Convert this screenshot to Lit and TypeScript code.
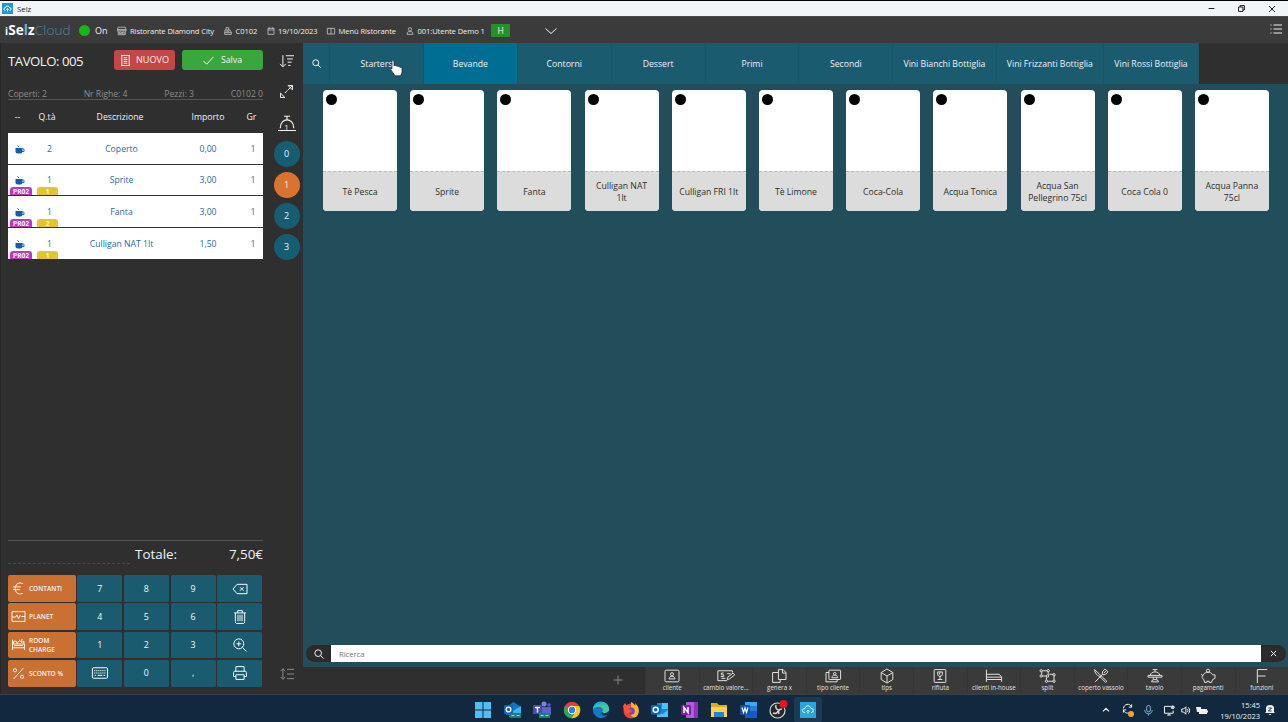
import { LitElement, html, css, svg, nothing } from "lit";
import { customElement, property } from "lit/decorators.js";
import { classMap } from "lit/directives/class-map.js";

// Line icons, drawn on a 24 unit grid.
const ICONS: Record<string, any> = {
  store: svg`<path d="M3 3h18l2 6H1zM1 9v3h22V9M3 12v10h18V12M14 22v-7h4v7M6 15h5v4H6z"/>`,
  register: svg`<path d="M6 9V2h8v7M3 9h15l4 8v5H2v-5zM2 17h20M7 13h9"/>`,
  calendar: svg`<path d="M3 4h18v18H3zM3 9h18M7 1v5M17 1v5"/>`,
  book: svg`<path d="M12 4H1v17h22V4H12v18"/>`,
  user: svg`<circle cx="12" cy="7" r="5"/><path d="M3 22c0-6 3-8 6-8h6c3 0 6 2 6 8z"/>`,
  receipt: svg`<path d="M2 1h20M2 23h20M4 1v22M20 1v22M8 6h8M8 10h8M8 14h8M8 18h8"/>`,
  check: svg`<path d="M1 13l7 7L23 4"/>`,
  search: svg`<circle cx="10" cy="10" r="8"/><path d="M16 16l7 7"/>`,
  sort: svg`<path d="M5 2v20M0 17l5 5 5-5M10 3h14M12 8.500h10M13 14h7M14 19.500h4"/>`,
  expand: svg`<path d="M9 15l5-5M15 9l8-8M15 1h8v8zM1 15v8h8z"/>`,
  bell: svg`<path d="M0 22h24M3 19C3 4 21 4 21 19M12 7V3M8 3h8"/>`,
  lines: svg`<path d="M5 3v18M1 7l4-4 4 4M1 17l4 4 4-4M12 4h12M12 12h12M12 20h12"/>`,
  list: svg`<path d="M7 4h17M7 12h17M7 20h17M1 4h2M1 12h2M1 20h2"/>`,
  chev: svg`<path d="M1 7l11 10L23 7"/>`,
  up: svg`<path d="M3 16l9-9 9 9"/>`,
  plus: svg`<path d="M12 1v22M1 12h22"/>`,
  close: svg`<path d="M3 3l18 18M21 3L3 21"/>`,
  min: svg`<path d="M2 12h20"/>`,
  restore: svg`<path d="M2 7h15v15H2zM7 7V2h15v15h-5"/>`,
  euro: svg`<path d="M20 3C10-1 6 6 6 12s4 13 14 9M2 9h14M2 14h13"/>`,
  pulse: svg`<path d="M0 3h24v18H0zM0 13h7l2-4 3 7 3-6 2 2h7"/>`,
  bed: svg`<path d="M1 3v19M1 18h22M23 22V11H1M3 11V6h5l2 5M10 8l5-3 2 3 5-2v5M4 14h16M13 3l2 2M19 2l-2 5"/>`,
  percent: svg`<path d="M21 2L3 22"/><circle cx="5.500" cy="6" r="3"/><circle cx="18.500" cy="18" r="3"/>`,
  back: svg`<path d="M7 4h17v16H7l-7-8zM12 9l6 6M18 9l-6 6"/>`,
  trash: svg`<path d="M2 5h20M8 5V1h8v4M4 5v15q0 3 2 3h12q2 0 2-3V5M8.500 8v11M12 8v11M15.500 8v11"/>`,
  zoomin: svg`<circle cx="10" cy="10" r="8.500"/><path d="M16 16l7 7M10 6v8M6 10h8"/>`,
  keyboard: svg`<rect x="-1" y="3" width="26" height="18" rx="2"/><path d="M2 8h20M2 12h20" stroke-dasharray="2 1.500"/><path d="M3 16h2M8 16h8M18 16h3"/>`,
  printer: svg`<path d="M5 9V1h14v8M5 18H1v-7q0-2 2-2h18q2 0 2 2v7h-4M5 15h14v8H5z"/>`,
  card: svg`<rect x="0" y="2" width="24" height="20" rx="2"/><circle cx="12" cy="9" r="2.700"/><path d="M7 17c0-6 10-6 10 0z"/>`,
  cheque: svg`<path d="M23 6V3H-2v17h16M14 8h6M4 16h7M8 7H4v3h4v3H3M14 18l1-4 9-7 3 3-9 7z"/>`,
  copies: svg`<path d="M11 1h8l5 5v12H11zM18 1v6h6M11 6H1v17h13v-5"/>`,
  cards: svg`<rect x="5" y="2" width="20" height="16" rx="1"/><path d="M5 6H0v16h19v-4M10 15c0-6 10-6 10 0z"/><circle cx="15" cy="8" r="2.200"/>`,
  cube: svg`<path d="M12 0l10 6v12l-10 6-10-6V6zM2 6l10 6 10-6M12 12v12"/>`,
  reject: svg`<rect x="2" y="1" width="20" height="22" rx="1"/><path d="M8 5h8v4c0 5-8 5-8 0zM12 13v5M8 18h8M12 5l-1 4 2 2"/>`,
  bunk: svg`<path d="M-1 1v21M-1 18h26M25 22v-8l-4-5H-1M-1 14h26"/>`,
  split: svg`<path d="M3 3h11v9H3zM16 9h8v12H11v-7"/><g fill="#3a3a3a"><circle cx="2" cy="3" r="2"/><circle cx="14" cy="3" r="2"/><circle cx="2" cy="12" r="2"/><circle cx="13" cy="12" r="2"/><circle cx="24" cy="10" r="2"/><circle cx="11" cy="21" r="2"/><circle cx="24" cy="21" r="2"/></g>`,
  cutlery: svg`<path d="M1 1c0 6 4 10 9 12l10 10 2-2zM2 22L15 9"/><path d="M14 9l1-5 4-4 5 5-4 4-5 1zM17 7l4-4"/>`,
  table: svg`<path d="M0 11h24v3H0zM4 11C4 3 20 3 20 11M12 5V1M8 1h8M9 14v4M15 14v4M6 22q0-4 6-4t6 4z"/>`,
  pig: svg`<path d="M4 10c3-6 13-6 16 0h4v6l-4 2-2 5h-4v-2h-4v2H6l-1-5c-4-2-4-5-1-8zM0 9l4 3"/><circle cx="12" cy="3" r="2.800"/>`,
  f: svg`<path d="M4 24V1h17M4 12h14"/>`,
  cloud: svg`<path d="M6 17c-5 0-5-7 0-7 1-6 10-6 12 0 5 0 5 7 0 7M9 15l3-3 3 3M12 12v8"/>`,
  sync: svg`<path d="M21 9C17-1 4 2 3 12M21 3v6h-6M3 15c2 8 12 9 15 4M3 21v-6h6"/>`,
  mic: svg`<rect x="8" y="1" width="8" height="14" rx="4"/><path d="M4 11c0 11 16 11 16 0M12 19v4"/>`,
  screen: svg`<path d="M15 3H1v15h19v-6M7 22h8M11 18v4M19 1v7M16 3h6v4h-6z"/>`,
  speaker: svg`<path d="M2 8h5l6-6v20l-6-6H2zM17 8c2 3 2 5 0 8M20 4c4 5 4 11 0 16"/>`,
};

@customElement("ui-icon")
export class UiIcon extends LitElement {
  @property() name = "";
  @property({ type: Number }) size = 14;
  @property({ type: Number }) weight = 1;
  static styles = css`
    :host { display: inline-flex; flex: none; }
    svg { display: block; overflow: visible; fill: none; stroke: currentColor; stroke-linejoin: round; }
  `;
  render() {
    return html`<svg width=${this.size} height=${this.size} viewBox="0 0 24 24"
      stroke-width=${(this.weight * 24) / this.size}>${ICONS[this.name]}</svg>`;
  }
}

// Full-colour pictures of the taskbar applications, on a 20 unit grid.
const APPS: any[] = [
  svg`<path fill="#50bdf5" d="M2 2h7.500v7.500H2zM10.500 2H18v7.500h-7.500zM2 10.500h7.500V18H2zM10.500 10.500H18V18h-7.500z"/>`,
  svg`<path fill="#1475c4" d="M3 7l7.500-5L18 7v8H3z"/><path fill="#3bb5ee" d="M8 12l10-6v11H6z"/><rect x="1" y="5" width="9" height="9" rx="1" fill="#1262b8"/><circle cx="5.500" cy="9.500" r="2.400" fill="none" stroke="#fff" stroke-width="1.300"/><path fill="#1e7d78" d="M7 13h11v5H7z"/><path stroke="#8ce1d2" d="M8.500 15.500h3M13.500 15.500h3"/>`,
  svg`<circle cx="12" cy="4" r="2.500" fill="#7b83eb"/><circle cx="17" cy="5" r="1.800" fill="#5059c9"/><path fill="#5a62c8" d="M8 7h11v8H8z"/><rect x="1" y="5" width="9" height="9" rx="1" fill="#444cb5"/><path stroke="#fff" stroke-width="1.400" d="M3 7.500h5M5.500 7.500v5"/><path fill="#1e7d78" d="M7 13h11v5H7z"/><path stroke="#8ce1d2" d="M8.500 15.500h3M13.500 15.500h3"/>`,
  svg`<circle cx="10" cy="10" r="8.200" fill="#e23e31"/><path fill="#30a552" d="M10 10L2.900 6A8.200 8.200 0 0 0 9.500 18.200l4-6.200z"/><path fill="#fbc71b" d="M10 10l3.500 2-4 6.200A8.200 8.200 0 0 0 17.200 6H10z"/><circle cx="10" cy="10" r="4.200" fill="#fff"/><circle cx="10" cy="10" r="3.200" fill="#347fe2"/>`,
  svg`<circle cx="10" cy="10" r="8.200" fill="#1479c4"/><path fill="#42c7a0" d="M2 9C3 0 17-1 18.200 9c0 4-5 5-7 3 2-3-1-6-5-5-2 0-3 1-4.200 2z"/><path fill="#23b0dd" d="M2 9C4-1 13 1 15 5 9 3 4 5 2 9z"/><path fill="#12283f" d="M11 12c2 2 5 1.500 7-1l-.6 3.500c-4 2-8 1-6.400-2.500z"/>`,
  svg`<circle cx="10" cy="11" r="7.500" fill="#f2462c"/><path fill="#fdb52a" d="M10 2c3 1 3 3 4 4 1-1 0-2 0-3 5 4 5 11 1 14-4 1-6-2-5-6z"/><circle cx="10" cy="11" r="3.800" fill="#7a42c8"/><path fill="#f9543b" d="M2 6l2-3 2 3h4L8 9l3 2-4 3-4-3z"/>`,
  svg`<path fill="#1686d8" d="M7 3h11v14H7z"/><path fill="#4fc3f5" d="M12 3h6v6h-6zM7 12l5.500 2L18 10v7H7z"/><rect x="1" y="5" width="9.500" height="9.500" rx="1" fill="#0a66b9"/><circle cx="5.700" cy="9.700" r="2.500" fill="none" stroke="#fff" stroke-width="1.400"/>`,
  svg`<rect x="6" y="2" width="12" height="16" rx="1" fill="#b35bd8"/><path fill="#8a32b8" d="M14 2h4v16h-4z"/><rect x="1" y="5" width="10" height="10" rx="1" fill="#7a21a6"/><path fill="none" stroke="#fff" stroke-width="1.500" d="M4 13V7.500l4 5V7"/>`,
  svg`<path fill="#e5a91d" d="M2 3h6l2 2h8v12H2z"/><path fill="#fcd354" d="M2 7h16v10H2z"/><path fill="#2a83c8" d="M5 12h10v5H5z"/>`,
  svg`<path fill="#2b7cd3" d="M6 2h12v16H6z"/><path fill="#41a5ee" d="M6 2h12v4H6z"/><path fill="#185abd" d="M6 11h12v7H6z"/><rect x="1" y="5" width="10" height="10" rx="1" fill="#174fa8"/><path fill="none" stroke="#fff" stroke-width="1.200" d="M3 7.500l1.500 5L6 8l1.500 4.500L9 7.500"/>`,
  svg`<circle cx="9.500" cy="10.500" r="7.500" fill="#25262b" stroke="#d6d6d6" stroke-width="1.200"/><path fill="none" stroke="#d6d6d6" stroke-width="1.500" d="M8 5c-1 3 1 5 3 5M14 9c-3 0-4 2-3 5M5 13c3 1 5 0 5-3"/><circle cx="15.500" cy="4" r="4" fill="#e8151c"/>`,
  svg`<path fill="#2ba5dc" d="M2 2h16v16H2z"/><path fill="none" stroke="#fff" stroke-width=".9" d="M7 12.500c-3.500 0-3.500-4 0-4 .8-3.500 5-3.500 6 0 3 0 3 4 0 4M8.500 11.500l1.500-1.500 1.500 1.500M10 10v3.500"/>`,
];

@customElement("app-root")
export class AppRoot extends LitElement {
  private info = [
    ["store", "Ristorante Diamond City", 107],
    ["register", "C0102", 42.5],
    ["calendar", "19/10/2023", 60.5],
    ["book", "Menù Ristorante", 79],
    ["user", "001:Utente Demo 1", 85],
  ] as const;
  private rows = [
    ["2", "Coperto", "0,00", ""],
    ["1", "Sprite", "3,00", "1"],
    ["1", "Fanta", "3,00", "2"],
    ["1", "Culligan NAT 1lt", "1,50", "1"],
  ];
  private tabs = ["Starters", "Bevande", "Contorni", "Dessert", "Primi", "Secondi",
    "Vini Bianchi Bottiglia", "Vini Frizzanti Bottiglia", "Vini Rossi Bottiglia"];
  private products = ["Tè Pesca", "Sprite", "Fanta", "Culligan NAT\n1lt", "Culligan FRI 1lt", "Tè Limone",
    "Coca-Cola", "Acqua Tonica", "Acqua San\nPellegrino 75cl", "Coca Cola 0", "Acqua Panna\n75cl"];
  private pay = [["euro", "CONTANTI"], ["pulse", "PLANET"], ["bed", "ROOM CHARGE"], ["percent", "SCONTO %"]];
  private keys = [["7", "8", "9", "@back"], ["4", "5", "6", "@trash"], ["1", "2", "3", "@zoomin"], ["@keyboard", "0", ",", "@printer"]];
  private tools = [["card", "cliente"], ["cheque", "cambio valore..."], ["copies", "genera x"], ["cards", "tipo cliente"],
    ["cube", "tips"], ["reject", "rifiuta"], ["bunk", "clienti in-house"], ["split", "split"], ["cutlery", "coperto vassoio"],
    ["table", "tavolo"], ["pig", "pagamenti"], ["f", "funzioni"]];

  static styles = css`
    :host { display: flex; flex-direction: column; width: 1288px; height: 722px; overflow: hidden; background: #2f2f2f;
      color: #f2f2f2; font-family: "Open Sans", sans-serif; font-size: 8.67px; line-height: 12px; white-space: nowrap; }
    * { box-sizing: border-box; }
    .title { height: 16px; flex: none; border-top: 1px solid #000; background: #f1f5f9; color: #222; display: flex; align-items: center; padding-left: 2px; font-size: 7.800px; }
    .title .app { width: 11px; height: 11px; background: #2497cf; color: #fff; display: grid; place-items: center; margin-right: 4px; }
    .title .win { margin-left: auto; display: flex; gap: 23px; padding-right: 12px; color: #222; }
    .head { height: 27px; flex: none; background: #3b3b3b; display: flex; align-items: center; padding: 1px 6px 0 5px; font-size: 7.600px; letter-spacing: -.09px; border-top: 1px solid #4a4a4a; }
    .logo { width: 74px; font-size: 13.600px; line-height: 18px; letter-spacing: .08px; color: #fff; font-weight: 700; }
    .logo .cl { color: #3f8eb4; font-weight: 300; }
    .logo .sm { font-size: 10px; }
    .logo i { color: #6fb5d0; font-style: normal; }
    .led { width: 11px; height: 11px; border-radius: 50%; background: #1ab51a; margin-right: 5px; }
    .on { width: 22px; font-size: 9px; }
    .info { display: flex; align-items: center; gap: 3.500px; color: #f0f0f0; }
    .info ui-icon { color: #c8c8c8; }
    .h { width: 19px; height: 13px; background: #27902b; border-radius: 1px; text-align: center; line-height: 13px; font-size: 8.500px; margin-right: 35px; }
    .head .menu { margin-left: auto; }
    .main { height: 651px; flex: none; display: grid; grid-template-columns: 303px 985px; }
    .left { display: grid; grid-template-columns: 262px 40px; border-left: 1px solid #262626; }
    .order { display: flex; flex-direction: column; padding-left: 7px; }
    .top { display: flex; align-items: center; height: 34px; gap: 7px; }
    .top .name { font-size: 13.200px; letter-spacing: -.48px; width: 99px; padding-top: 1px; }
    .btn { height: 20px; border-radius: 3px; display: flex; align-items: center; justify-content: center; font-size: 9.100px; gap: 5px; background: #c64545; width: 61px; }
    .btn.save { background: #3aa63e; width: 81px; gap: 7px; font-size: 8.800px; }
    .stats { height: 14px; margin: 9px 0 11px; padding-top: 1px; display: flex; justify-content: space-between; color: #8d8d8d; border-bottom: 1px solid #555; line-height: 14px; letter-spacing: -.03px; }
    .row { display: grid; grid-template-columns: 24px 35px 109px 64px 23px; text-align: center; align-items: center; }
    .th { height: 22px; margin-top: -5px; margin-bottom: 5px; padding-bottom: 1px; }
    .th > :first-child { padding-right: 5px; } .th > :nth-child(2) { padding-right: 5px; } .th > :nth-child(3) { padding-right: 3px; }
    .td { height: 31.600px; background: #fff; color: #2b69a3; position: relative; border-bottom: 1px solid #333; padding-top: 1px; }
    .td:last-child { border: 0; padding-bottom: 1px; }
    .td > :last-of-type { padding: 0; }
    .td svg { display: block; margin: 1px auto 0; }
    .td .g { padding-left: 3px; }
    .tag { position: absolute; bottom: 0; height: 8px; line-height: 9px; font-size: 6.500px; font-weight: 700; color: #fff; border-radius: 3px 3px 0 0; text-align: center; overflow: hidden; }
    .pr { left: 2px; width: 22px; background: #b83cb8; }
    .yl { left: 29px; width: 21px; background: #e3c52f; color: #fff6c0; }
    .total { margin-top: auto; border-top: 1px solid #555; height: 34px; display: flex; justify-content: space-between; font-size: 13.400px; line-height: 27px; padding-left: 127px; }
    .dots { width: 122px; border-top: 1px dashed #4a4a4a; margin-top: -11px; margin-bottom: 11px; height: 0; }
    .pad { display: grid; grid-template-columns: 67.500px 45px 45px 45px 45px; grid-auto-rows: 26.700px; gap: 1.500px 1.700px; margin-bottom: 7.500px; }
    .key { background: #1b5b70; border-radius: 1.500px; display: grid; place-items: center; font-size: 8.800px; color: #f5fafa; }
    .pay { background: #cb7033; border-radius: 2px; display: grid; grid-template-columns: 21px 40px; align-items: center; justify-items: center; font-size: 6.500px; line-height: 9px; white-space: normal; font-weight: 600; }
    .pay span { justify-self: start; }
    .side { display: flex; flex-direction: column; align-items: center; padding: 10.500px 0 13px 7px; }
    .side ui-icon { height: 31px; }
    .bellbox { position: relative; height: 24px; margin: -2px 0 3px; }
    .bellbox b { position: absolute; inset: 7px 0 auto; text-align: center; font-size: 8px; font-weight: 400; line-height: 11px; }
    .circle { width: 26px; height: 26px; border-radius: 50%; background: #175d72; display: grid; place-items: center; margin-bottom: 5px; font-size: 9px; flex: none; padding-top: 1px; }
    .circle.hot { background: #d87330; }
    .side .last { margin-top: auto; height: 14px; color: #8a8a8a; }
    .right { display: flex; flex-direction: column; }
    .area { background: #224d5b; height: 624px; display: flex; flex-direction: column; }
    .tabs { background: #2f2f2f; height: 40.500px; display: grid; grid-template-columns: 27px repeat(6, 93.900px) 103.200px 107.600px 94.700px; }
    .tab { background: #1b5b70; display: grid; place-items: center; border-right: 1px solid #195468; padding-top: 1px; position: relative; }
    .tab.on2 { background: #006e92; }
    .cursor { position: absolute; left: 60px; top: 17px; }
    .cards { display: grid; grid-template-columns: repeat(11, 74px); column-gap: 13.200px; padding: 6.500px 0 0 20px; }
    .card { height: 121px; border-radius: 4px; background: #fff; overflow: hidden; display: flex; flex-direction: column; }
    .pic { height: 80.500px; padding: 3.500px 3px; }
    .pic div { width: 11px; height: 11px; border-radius: 50%; background: #000; }
    .lbl { flex: 1; background: #dcdcdc; border-top: 1px dashed #bcbcbc; color: #2d2d2d; display: flex; align-items: center; justify-content: center; text-align: center; white-space: pre-line; padding: 2px 4px 0; }
    .search { margin-top: auto; margin-bottom: 5px; height: 17px; display: grid; grid-template-columns: 25px 930px 25px; padding-left: 3px; }
    .search > div { background: #2b2b2b; display: grid; place-items: center; }
    .search .a { border-radius: 9px 0 0 9px; } .search .c { border-radius: 0 9px 9px 0; }
    .search .b { background: #fff; color: #777; justify-content: start; padding-left: 8px; font-size: 7.900px; letter-spacing: -.15px; }
    .bar { flex: 1; display: grid; grid-template-columns: 342px repeat(12, 53.600px); font-size: 6.200px; line-height: 8px; color: #e0e0e0; }
    .bar > div { background: #3a3a3a; display: flex; flex-direction: column; align-items: center; padding-top: 2px; border-left: 1px solid #353535; gap: .500px; }
    .bar > div.add { background: #2f2f2f; border: 0; align-items: flex-end; padding: 8px 22px 0 0; color: #8a8a8a; }
    .task { flex: 1; background: #12283f; border-top: 1px solid #34404c; display: grid; grid-template-columns: 469px 354px 1fr; align-items: center; padding-top: 2px; }
    .apps { display: grid; grid-template-columns: repeat(12, 29.550px); grid-column: 2; align-items: center; }
    .apps div { display: grid; place-items: center; height: 26px; width: 28px; }
    .apps .act { background: #1d3850; border-radius: 3px; }
    .tray { display: flex; align-items: center; justify-content: flex-end; padding-right: 13px; font-size: 7.500px; line-height: 10.500px; }
    .sync { position: relative; margin: 0 10px 0 12px; }
    .sync i { position: absolute; right: -1px; bottom: 0; width: 6px; height: 6px; border-radius: 50%; background: #efa13a; }
    .mic { margin-right: 10px; color: #7fb6cf; display: flex; }
    .net { display: flex; align-items: center; gap: 6px; }
    .time { text-align: right; margin: 0 5px 0 12px; padding-top: 1px; }
  `;

  private cup = html`<svg width="10" height="9" viewBox="0 0 20 18"><path fill="#0c61ae" d="M1 6h14v7q0 4-4 4H5q-4 0-4-4z"/><path fill="none" stroke="#0c61ae" stroke-width="1.800" d="M15 8h3v5h-4M5 1l3 3"/></svg>`;

  render() {
    const icon = (n: string, s = 14, w = 1) => html`<ui-icon name=${n} .size=${s} .weight=${w}></ui-icon>`;
    return html`
      <div class="title"><div class="app">${icon("cloud", 9)}</div>Selz
        <div class="win">${icon("min", 7)}${icon("restore", 7)}${icon("close", 8)}</div></div>
      <div class="head">
        <div class="logo"><span class="sm">i</span>Se<i>l</i>z<span class="cl">Cloud</span></div><div class="led"></div><div class="on">On</div>
        ${this.info.map(([i, t, w]) => html`<div class="info" style="width:${w}px">${icon(i, i === "store" ? 9.5 : 8, 0.8)}${t}</div>`)}
        <div class="h">H</div>${icon("chev", 12)}<div class="menu">${icon("list", 12, 1.1)}</div>
      </div>
      <div class="main">
        <div class="left">
          <div class="order">
            <div class="top"><div class="name">TAVOLO: 005</div>
              <div class="btn">${icon("receipt", 11)}NUOVO</div>
              <div class="btn save">${icon("check", 11)}Salva</div></div>
            <div class="stats"><span>Coperti: 2</span><span>Nr Righe: 4</span><span>Pezzi: 3</span><span>C0102 0</span></div>
            <div class="row th"><span>--</span><span>Q.tà</span><span>Descrizione</span><span>Importo</span><span>Gr</span></div>
            <div>${this.rows.map(([q, d, p, y]) => html`<div class="row td">
              <span>${this.cup}</span><span>${q}</span><span>${d}</span><span>${p}</span><span class="g">1</span>
              ${y ? html`<div class="tag pr">PR02</div><div class="tag yl">${y}</div>` : nothing}</div>`)}</div>
            <div class="total"><span>Totale:</span><span>7,50€</span></div><div class="dots"></div>
            <div class="pad">${this.keys.map((r, i) => html`
              <div class="pay">${icon(this.pay[i][0], 13)}<span>${this.pay[i][1]}</span></div>
              ${r.map((k) => html`<div class="key">${k[0] === "@" ? icon(k.slice(1), 14) : k}</div>`)}`)}</div>
          </div>
          <div class="side">
            ${icon("sort", 14)}${icon("expand", 13)}
            <div class="bellbox">${icon("bell", 18, 1.2)}<b>1</b></div>
            ${["0", "1", "2", "3"].map((n) => html`<div class=${classMap({ circle: true, hot: n === "1" })}>${n}</div>`)}
            <ui-icon class="last" name="lines" .size=${14}></ui-icon>
          </div>
        </div>
        <div class="right">
          <div class="area">
            <div class="tabs"><div class="tab">${icon("search", 9)}</div>
              ${this.tabs.map((t, i) => html`<div class=${classMap({ tab: true, on2: i === 1 })}>${t}${i === 0 ? html`
                <svg class="cursor" width="13" height="17" viewBox="0 0 13 17"><path fill="#fff" stroke="#222" stroke-width=".7" d="M2 1.500C2 .3 4 .3 4 1.500V6c.5-1 2-.8 2 .3.500-.8 2-.6 2 .5.600-.8 2-.4 2 .7.800-.6 2-.2 2 .8v3c0 2-1 3-1.500 4.500H5C4 13.500 2 12 .8 9.500c-.4-1 .6-1.500 1.200-.6z"/></svg>` : nothing}</div>`)}</div>
            <div class="cards">${this.products.map((p) => html`<div class="card"><div class="pic"><div></div></div><div class="lbl">${p}</div></div>`)}</div>
            <div class="search"><div class="a">${icon("search", 10)}</div><div class="b">Ricerca</div><div class="c">${icon("close", 7)}</div></div>
          </div>
          <div class="bar"><div class="add">${icon("plus", 10)}</div>
            ${this.tools.map(([i, t]) => html`<div>${icon(i, 14)}<span>${t}</span></div>`)}</div>
        </div>
      </div>
      <div class="task">
        <div class="apps">${APPS.map((a, i) => html`<div class=${i === 11 ? "act" : ""}><svg width="20" height="20" viewBox="0 0 20 20">${a}</svg></div>`)}</div>
        <div class="tray">${icon("up", 8, 1.2)}<div class="sync">${icon("sync", 11)}<i></i></div><div class="mic">${icon("mic", 11)}</div>
          <div class="net">${icon("screen", 11)}${icon("speaker", 9)}
          <svg width="12" height="9" viewBox="0 0 12 9"><path fill="#eee" d="M3 3h8v5H3zM11 4.500h1v2h-1zM0 1h5v3L3 6H1z"/></svg></div>
          <div class="time">15:45<br>19/10/2023</div>
          <svg width="10" height="12" viewBox="0 0 10 12"><path fill="#eee" d="M1 8V4q0-3 4-3t4 3v4l1 1H0zM3.500 10h3q-1.500 2-3 0z"/><path fill="none" stroke="#12283f" stroke-width=".9" d="M3.500 4h3l-3 3h3"/></svg>
        </div>
      </div>`;
  }
}
